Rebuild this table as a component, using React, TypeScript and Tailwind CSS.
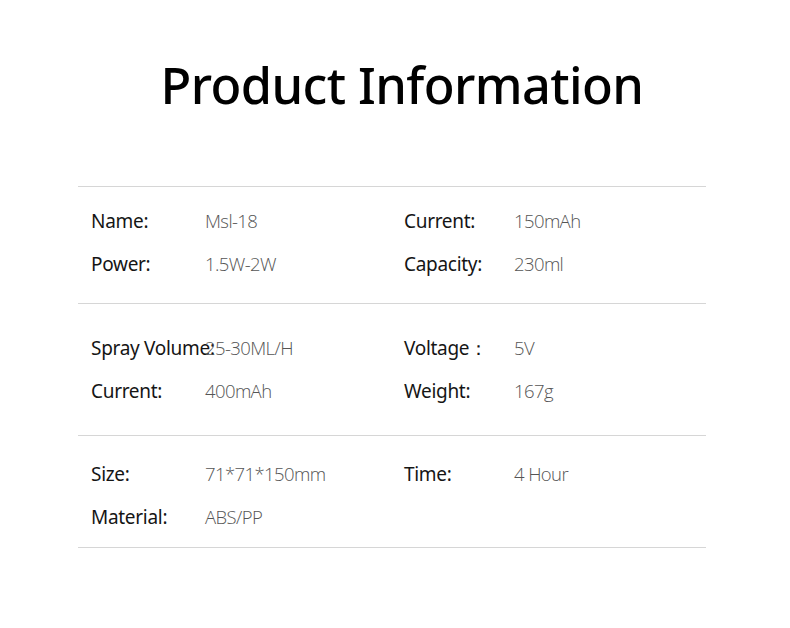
import React from "react";

type Item = { label: string; value: string };

const sections: { left: Item[]; right: Item[]; pad: string }[] = [
  {
    left: [
      { label: "Name:", value: "Msl-18" },
      { label: "Power:", value: "1.5W-2W" },
    ],
    right: [
      { label: "Current:", value: "150mAh" },
      { label: "Capacity:", value: "230ml" },
    ],
    pad: "pt-[13px] pb-[17px]",
  },
  {
    left: [
      { label: "Spray Volume:", value: "25-30ML/H" },
      { label: "Current:", value: "400mAh" },
    ],
    right: [
      { label: "Voltage\uFF1A", value: "5V" },
      { label: "Weight:", value: "167g" },
    ],
    pad: "pt-[23px] pb-[22px]",
  },
  {
    left: [
      { label: "Size:", value: "71*71*150mm" },
      { label: "Material:", value: "ABS/PP" },
    ],
    right: [{ label: "Time:", value: "4 Hour" }],
    pad: "pt-[17px] pb-[8px]",
  },
];

function Row({ item, labelW }: { item: Item; labelW: string }) {
  return (
    <div className="flex h-[43px] items-center">
      <span className={`${labelW} shrink-0 whitespace-nowrap text-[19px] tracking-[-0.3px] text-[#151515]`}>
        {item.label}
      </span>
      <span
        className="-mt-[2px] whitespace-nowrap text-[18.5px] font-light tracking-[-0.6px] text-[#555]"
        style={{ fontFamily: '"Open Sans", "Noto Sans", sans-serif' }}
      >
        {item.value}
      </span>
    </div>
  );
}

export default function App() {
  return (
    <div className="h-[628px] w-[790px] bg-white" style={{ fontFamily: '"Noto Sans", "Open Sans", sans-serif' }}>
      {/* titulo */}
      <div className="flex h-[186px] items-start justify-center pl-[14px] pt-[49px]">
        <h1 className="text-[50.5px] font-medium leading-[72px] tracking-[-0.6px] text-black">Product Information</h1>
      </div>

      <div className="ml-[78px] w-[628px] border-t border-[#d6d6d6]">
        {sections.map((s, i) => (
          <div key={i} className={`flex border-b border-[#d6d6d6] ${s.pad}`}>
            <div className="flex w-[326px] flex-col pl-[13px]">
              {s.left.map((it) => (
                <Row key={it.label} item={it} labelW="w-[114px]" />
              ))}
            </div>
            <div className="flex flex-col">
              {s.right.map((it) => (
                <Row key={it.label} item={it} labelW="w-[110px]" />
              ))}
            </div>
          </div>
        ))}
      </div>
    </div>
  );
}
